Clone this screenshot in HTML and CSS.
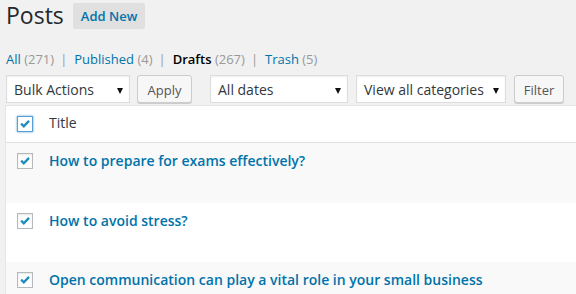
FILE: index.html
```html
<!DOCTYPE html>
<html>
<head>
<meta charset="utf-8">
<link rel="stylesheet" href="styles.css">
</head>
<body>
<div class="wrap">
  <div class="page-head">
    <h1 class="page-title">Posts</h1>
    <a class="add-new">Add New</a>
  </div>
  <ul class="subsubsub">
    <li><a class="link">All <span class="count">(271)</span></a><span class="sep">|</span></li>
    <li><a class="link">Published <span class="count">(4)</span></a><span class="sep">|</span></li>
    <li><a class="link current">Drafts <span class="count">(267)</span></a><span class="sep">|</span></li>
    <li><a class="link">Trash <span class="count">(5)</span></a></li>
  </ul>
  <div class="tablenav">
    <div class="select select-bulk">Bulk Actions<i class="arrow"></i></div>
    <button class="btn btn-apply">Apply</button>
    <div class="select select-dates">All dates<i class="arrow"></i></div>
    <div class="select select-cats">View all categories<i class="arrow"></i></div>
    <button class="btn btn-filter">Filter</button>
  </div>
  <div class="list-table">
    <div class="row row-head">
      <div class="cell-cb"><span class="checkbox focused"><svg viewBox="0 0 16 16" class="tick"><path d="M3.6 7.6 L6.6 10.6 L12.6 4.4" /></svg></span></div>
      <div class="cell-title head-title">Title</div>
    </div>
    <div class="row row-alt">
      <div class="cell-cb"><span class="checkbox"><svg viewBox="0 0 16 16" class="tick"><path d="M3.6 7.6 L6.6 10.6 L12.6 4.4" /></svg></span></div>
      <div class="cell-title"><a class="post-link">How to prepare for exams effectively?</a></div>
    </div>
    <div class="row">
      <div class="cell-cb"><span class="checkbox"><svg viewBox="0 0 16 16" class="tick"><path d="M3.6 7.6 L6.6 10.6 L12.6 4.4" /></svg></span></div>
      <div class="cell-title"><a class="post-link">How to avoid stress?</a></div>
    </div>
    <div class="row row-alt">
      <div class="cell-cb"><span class="checkbox"><svg viewBox="0 0 16 16" class="tick"><path d="M3.6 7.6 L6.6 10.6 L12.6 4.4" /></svg></span></div>
      <div class="cell-title"><a class="post-link">Open communication can play a vital role in your small business</a></div>
    </div>
  </div>
</div>
</body>
</html>
```
FILE: styles.css
```css
html, body {
  margin: 0;
  padding: 0;
  background: #f1f1f1;
  overflow: hidden;
}
body {
  font-family: "Open Sans", "Liberation Sans", sans-serif;
  color: #444;
  width: 576px;
  height: 294px;
}
.wrap {
  padding-left: 5px;
  height: 294px;
  overflow: hidden;
}
.page-head {
  display: flex;
  align-items: flex-start;
  height: 30px;
}
.page-title {
  margin: 0;
  padding: 1px 0 0 1px;
  font-size: 23px;
  font-weight: 400;
  line-height: 29px;
  color: #23282d;
}
.add-new {
  margin: 3px 0 0 9px;
  padding: 4px 8px;
  background: #e0e0e0;
  color: #0073aa;
  font-size: 13px;
  font-weight: 600;
  line-height: 18px;
  border-radius: 2px;
}
.subsubsub {
  list-style: none;
  margin: 20px 0 0 1px;
  padding: 0;
  display: flex;
  font-size: 13px;
  line-height: 18px;
  color: #666;
}
.subsubsub li {
  white-space: nowrap;
}
.link {
  color: #0073aa;
}
.link.current {
  color: #000;
  font-weight: 600;
}
.count {
  color: #999;
  font-weight: 400;
}
.sep {
  color: #999;
  margin: 0 7px 0 6px;
}
.tablenav {
  display: flex;
  margin-top: 7px;
  height: 28px;
}
.select {
  position: relative;
  box-sizing: border-box;
  height: 28px;
  background: #fff;
  border: 1px solid #ddd;
  box-shadow: inset 0 1px 2px rgba(0,0,0,.07);
  font-size: 14px;
  line-height: 24px;
  padding: 2px 0 0 7px;
  color: #32373c;
  white-space: nowrap;
}
.arrow {
  position: absolute;
  right: 6px;
  top: 12px;
  width: 0;
  height: 0;
  border-left: 3.5px solid transparent;
  border-right: 3.5px solid transparent;
  border-top: 6px solid #111;
}
.select-bulk { margin-left: 1px; width: 124px; }
.select-dates { margin-left: 18px; width: 138px; }
.select-cats { margin-left: 8px; width: 150px; }
.btn {
  box-sizing: border-box;
  height: 28px;
  padding: 2px 0 0;
  margin: 0;
  background: #f7f7f7;
  border: 1px solid #ccc;
  border-radius: 3px;
  box-shadow: 0 1px 0 #ccc;
  color: #555;
  font-family: "Open Sans", "Liberation Sans", sans-serif;
  font-size: 13px;
  line-height: 22px;
  text-align: center;
}
.btn-apply { margin-left: 7px; width: 55px; }
.btn-filter { margin-left: 8px; width: 50px; }
.list-table {
  margin-top: 2px;
  border: 1px solid #e5e5e5;
  border-right: 0;
  background: #fff;
}
.row {
  display: flex;
  height: 59.5px;
  background: #fff;
}
.row-alt {
  background: #f9f9f9;
}
.row.row-head {
  height: 36px;
  border-bottom: 1px solid #e1e1e1;
}
.cell-cb {
  width: 43px;
  padding: 10px 0 0 11px;
  box-sizing: border-box;
  flex: none;
}
.cell-title {
  padding-top: 8px;
  font-size: 14px;
  line-height: 19.6px;
  white-space: nowrap;
  overflow: hidden;
}
.head-title {
  padding-top: 7px;
  color: #32373c;
}
.post-link {
  color: #0073aa;
  font-weight: 600;
}
.checkbox {
  display: block;
  box-sizing: border-box;
  width: 16px;
  height: 16px;
  border: 1px solid #b4b9be;
  background: #fff;
  box-shadow: inset 0 1px 2px rgba(0,0,0,.1);
}
.checkbox.focused {
  border-color: #5b9dd9;
  box-shadow: 0 0 2px rgba(30,140,190,.8);
}
.tick {
  display: block;
  width: 14px;
  height: 14px;
  fill: none;
  stroke: #1e8cbe;
  stroke-width: 2.6;
}
```
